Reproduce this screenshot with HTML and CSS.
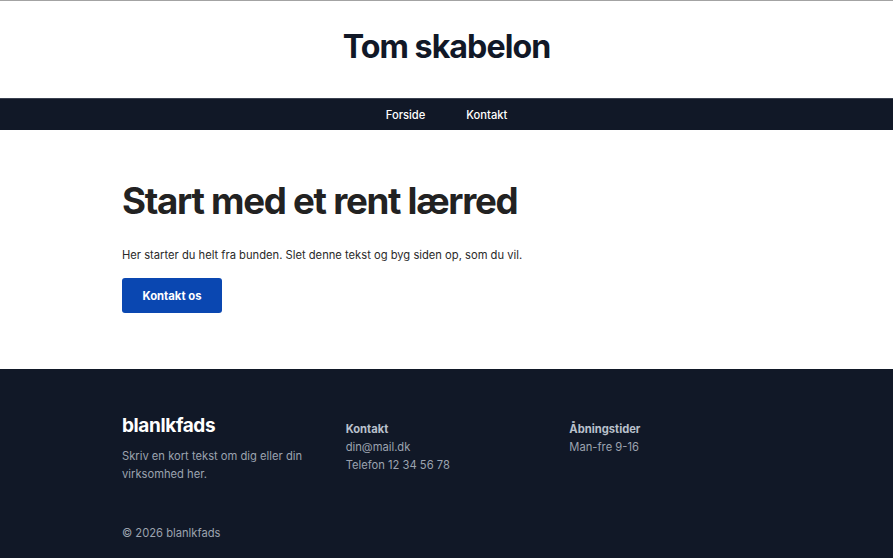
FILE: index.html
```html
<!DOCTYPE html>
<html lang="da">
<head>
<meta charset="utf-8">
<title>Tom skabelon</title>
<link rel="stylesheet" href="styles.css">
</head>
<body>
<header class="site-header">
  <h1 class="site-title">Tom skabelon</h1>
</header>
<nav class="site-nav">
  <a href="#">Forside</a>
  <a href="#">Kontakt</a>
</nav>
<main class="hero">
  <h2 class="hero-title">Start med et rent lærred</h2>
  <p class="hero-text">Her starter du helt fra bunden. Slet denne tekst og byg siden op, som du vil.</p>
  <a class="btn" href="#">Kontakt os</a>
</main>
<footer class="site-footer">
  <div class="footer-grid">
    <div class="footer-col">
      <div class="brand">blanlkfads</div>
      <p class="about">Skriv en kort tekst om dig eller din virksomhed her.</p>
    </div>
    <div class="footer-col">
      <div class="col-head">Kontakt</div>
      <div class="col-line">din@mail.dk</div>
      <div class="col-line">Telefon 12 34 56 78</div>
    </div>
    <div class="footer-col">
      <div class="col-head">Åbningstider</div>
      <div class="col-line">Man-fre 9-16</div>
    </div>
  </div>
  <div class="copy">© 2026 blanlkfads</div>
</footer>
</body>
</html>
```
FILE: styles.css
```css
* { box-sizing: border-box; }
html, body { margin: 0; padding: 0; }
body {
  font-family: Inter, "Noto Sans", sans-serif;
  background: #ffffff;
  color: #222;
  border-top: 1px solid #a3a3a3;
}
.site-header {
  height: 97px;
  display: flex;
  justify-content: center;
  padding-top: 26px;
}
.site-title {
  margin: 0;
  font-size: 32.2px;
  line-height: 40px;
  font-weight: 700;
  letter-spacing: -0.03em;
  color: #111827;
}
.site-nav {
  background: #111827;
  border-top: 1px solid #3a4150;
  height: 32px;
  display: flex;
  justify-content: center;
  align-items: center;
  gap: 41px;
}
.site-nav a {
  color: #ffffff;
  text-decoration: none;
  font-size: 11.2px;
  font-weight: 500;
}
.hero {
  padding: 48px 122px 56px;
}
.hero-title {
  margin: 0;
  font-size: 36.7px;
  font-weight: 700;
  letter-spacing: -0.035em;
  color: #222;
  line-height: 46px;
}
.hero-text {
  margin: 22px 0 14px;
  font-size: 11.2px;
  line-height: 18px;
  color: #2a2a2a;
}
.btn {
  display: inline-flex;
  align-items: center;
  justify-content: center;
  width: 100px;
  height: 35px;
  background: #0a47b1;
  color: #fff;
  border-radius: 3px;
  font-size: 11.3px;
  font-weight: 700;
  text-decoration: none;
}
.site-footer {
  background: #111827;
  padding: 46px 122px 20px;
  color: #9ca3af;
  font-size: 11.2px;
}
.footer-grid {
  display: grid;
  grid-template-columns: repeat(3, 1fr);
  column-gap: 22px;
  width: 649px;
}
.brand {
  color: #fff;
  font-size: 19px;
  font-weight: 700;
  letter-spacing: -0.02em;
  line-height: 22px;
}
.about {
  margin: 10px 0 0;
  line-height: 18px;
  max-width: 200px;
}
.col-head {
  margin-top: 5px;
  color: #b9c0cc;
  font-weight: 700;
  line-height: 18px;
}
.col-line {
  line-height: 18px;
}
.copy {
  margin-top: 41px;
  line-height: 18px;
}
```
